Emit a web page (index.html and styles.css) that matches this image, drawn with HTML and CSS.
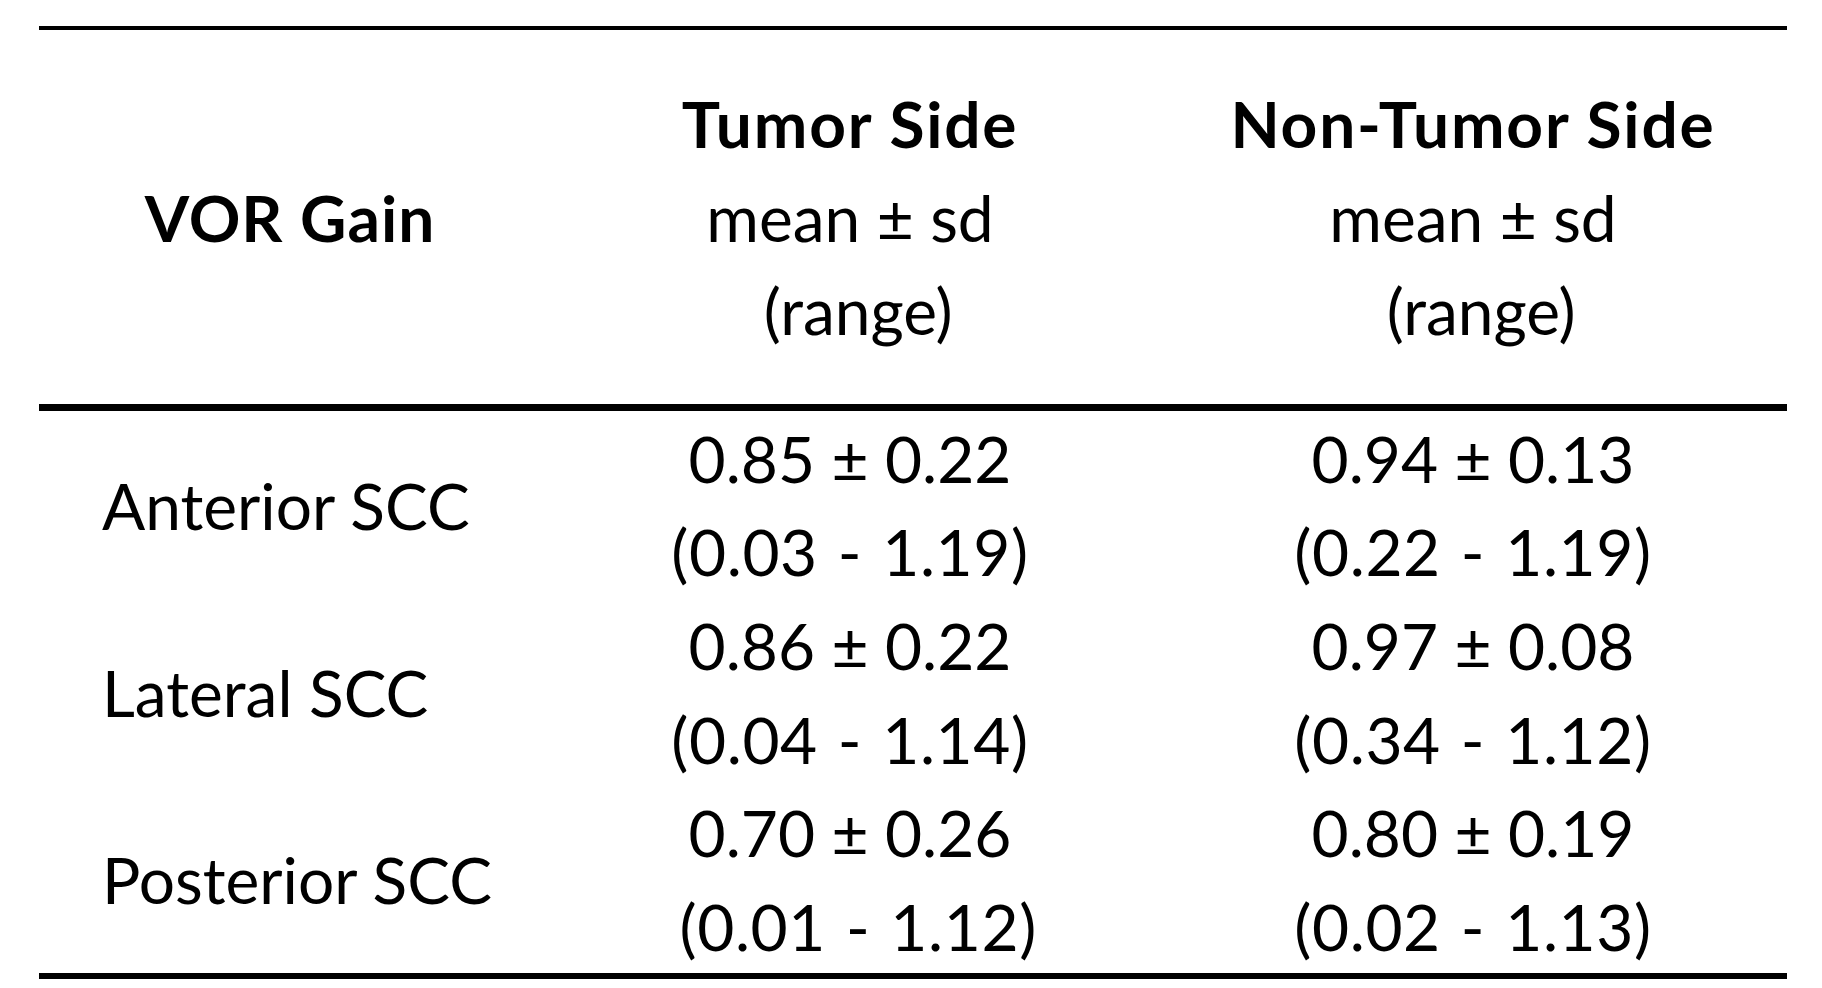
FILE: index.html
```html
<!DOCTYPE html>
<html lang="en">
<head>
<meta charset="utf-8">
<title>VOR Gain</title>
<link rel="stylesheet" href="styles.css">
</head>
<body>
<table class="vor">
  <colgroup>
    <col class="col-label">
    <col class="col-tumor">
    <col class="col-non">
  </colgroup>
  <thead>
    <tr>
      <th class="head-label">VOR Gain</th>
      <th><span class="strong">Tumor Side</span><br>mean ± sd<br>&nbsp;(range)</th>
      <th><span class="strong">Non-Tumor Side</span><br>mean ± sd<br>&nbsp;(range)</th>
    </tr>
  </thead>
  <tbody>
    <tr class="first">
      <td class="label">Anterior SCC</td>
      <td>0.85 ± 0.22<br><span class="range">(0.03 - 1.19)</span></td>
      <td>0.94 ± 0.13<br><span class="range">(0.22 - 1.19)</span></td>
    </tr>
    <tr>
      <td class="label">Lateral SCC</td>
      <td>0.86 ± 0.22<br><span class="range">(0.04 - 1.14)</span></td>
      <td>0.97 ± 0.08<br><span class="range">(0.34 - 1.12)</span></td>
    </tr>
    <tr class="last">
      <td class="label">Posterior SCC</td>
      <td>0.70 ± 0.26<br>&nbsp;<span class="range">(0.01 - 1.12)</span></td>
      <td>0.80 ± 0.19<br><span class="range">(0.02 - 1.13)</span></td>
    </tr>
  </tbody>
</table>
</body>
</html>
```
FILE: styles.css
```css
html, body {
  margin: 0;
  padding: 0;
  background: #ffffff;
}

.vor {
  border-collapse: separate;
  border-spacing: 0;
  table-layout: fixed;
  width: 1748px;
  margin: 26px 0 0 39px;
  font-family: Lato, "Open Sans", "Liberation Sans", sans-serif;
  font-size: 64px;
  line-height: 93.6px;
  color: #000000;
}

.col-label { width: 502px; }
.col-tumor { width: 618px; }
.col-non { width: 628px; }

.vor th {
  font-weight: normal;
  text-align: center;
  vertical-align: middle;
  border-top: 4px solid #000000;
  border-bottom: 7px solid #000000;
  padding: 47px 0 46px;
}

.vor th.head-label {
  font-weight: bold;
  letter-spacing: 1px;
}

.vor .strong {
  font-weight: bold;
  letter-spacing: 1.8px;
}

.vor td {
  text-align: center;
  vertical-align: middle;
  padding: 0;
}

.vor .range {
  letter-spacing: 0.6px;
  word-spacing: 3px;
}

.vor tr.first td {
  padding-top: 1px;
}

.vor td.label {
  text-align: left;
  padding-left: 63px;
}

.vor tr.last td {
  border-bottom: 6px solid #000000;
}
```
